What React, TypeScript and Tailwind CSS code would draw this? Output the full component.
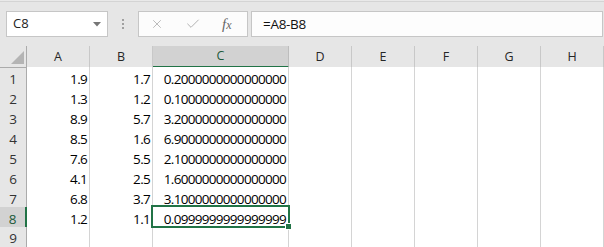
import { X, Check } from "lucide-react";

const cols = ["A", "B", "C", "D", "E", "F", "G", "H"];

const rows = [
  ["1.9", "1.7", "0.2000000000000000"],
  ["1.3", "1.2", "0.1000000000000000"],
  ["8.9", "5.7", "3.2000000000000000"],
  ["8.5", "1.6", "6.9000000000000000"],
  ["7.6", "5.5", "2.1000000000000000"],
  ["4.1", "2.5", "1.6000000000000000"],
  ["6.8", "3.7", "3.1000000000000000"],
  ["1.2", "1.1", "0.0999999999999999"],
  ["", "", ""],
];

const gridCols = "grid grid-cols-[27px_63px_63px_136px_63px_63px_63px_63px_63px]";

function Toolbar() {
  return (
    <div className="h-[46px] bg-[#e6e6e6] relative">
      <div className="h-px bg-[#e9e9e9]" />
      <div className="h-px bg-[#d4d4d4]" />
      <div className="flex items-start pt-[9px]">
        <div className="ml-[6px] w-[102px] h-[26px] bg-white border border-[#c6c6c6] flex items-center justify-between pl-[6px] pr-[6px]">
          <span className="text-[13px] text-[#222]">C8</span>
          <svg width="8" height="5" viewBox="0 0 8 5">
            <polygon points="0,0 8,0 4,4.5" fill="#767676" />
          </svg>
        </div>
        <div className="w-[30px] h-[26px] flex flex-col items-center justify-center gap-[2px]">
          <div className="w-[2px] h-[2px] bg-[#a0a0a0]" />
          <div className="w-[2px] h-[2px] bg-[#a0a0a0]" />
          <div className="w-[2px] h-[2px] bg-[#a0a0a0]" />
        </div>
        <div className="w-[110px] h-[26px] bg-[#fcfcfc] border border-[#c6c6c6] flex items-center">
          <X size={14} strokeWidth={1.5} className="ml-[11px] text-[#b2b2b2]" />
          <Check size={16} strokeWidth={1.5} className="ml-[21px] text-[#b2b2b2]" />
          <span className="ml-[21px] text-[#666] italic text-[15px] leading-none" style={{ fontFamily: '"Liberation Serif", serif' }}>
            f<span className="text-[12px]">x</span>
          </span>
        </div>
        <div className="ml-[3px] w-[352px] h-[26px] bg-[#fdfdfd] border border-[#c6c6c6] flex items-center pl-[11px]">
          <span className="text-[13.5px] text-[#111] tracking-[-0.3px]">=A8-B8</span>
        </div>
      </div>
    </div>
  );
}

function Header() {
  return (
    <div className={`${gridCols} h-[21px] bg-[#e6e6e6]`}>
      <div className="border-r border-b border-[#ababab] relative">
        <svg className="absolute left-[11px] top-[5px]" width="13" height="13" viewBox="0 0 13 13">
          <polygon points="13,0 13,13 0,13" fill="#b4b4b4" />
        </svg>
      </div>
      {cols.map((c) => {
        const sel = c === "C";
        return (
          <div
            key={c}
            className={
              sel
                ? "bg-[#d2d2d2] border-r border-[#bdbdbd] border-b-2 border-b-[#217346] flex items-center justify-center pt-px text-[12.5px] text-[#215a3a]"
                : "border-r border-b border-r-[#c8c8c8] border-b-[#ababab] flex items-center justify-center pt-[2px] text-[12.5px] text-[#262626]"
            }
          >
            {c}
          </div>
        );
      })}
    </div>
  );
}

function Row({ n, vals }: { n: number; vals: string[] }) {
  const sel = n === 8;
  return (
    <div className={`${gridCols} h-[20px]`}>
      <div
        className={
          sel
            ? "bg-[#d2d2d2] border-b border-[#c6c6c6] border-r-2 border-r-[#217346] flex items-center justify-center pt-px text-[13.5px] text-[#215a3a]"
            : "bg-[#e6e6e6] border-b border-r border-b-[#d0d0d0] border-r-[#ababab] flex items-center justify-center pt-px text-[13.5px] text-[#333]"
        }
      >
        {n}
      </div>
      {cols.map((c, i) => (
        <div
          key={c}
          className="bg-white border-r border-b border-[#d4d4d4] flex items-center justify-end pr-[2px] pt-[2px] text-[13.5px] text-black tracking-[-0.7px]"
        >
          {vals[i] ?? ""}
        </div>
      ))}
    </div>
  );
}

export default function App() {
  return (
    <div className="w-[604px] h-[247px] overflow-hidden bg-white" style={{ fontFamily: '"Open Sans", "Noto Sans", sans-serif' }}>
      <Toolbar />
      <div className="relative">
        <Header />
        {rows.map((r, i) => (
          <Row key={i} n={i + 1} vals={r} />
        ))}
        <div className="absolute left-[151px] top-[159px] w-[139px] h-[23px] border-2 border-[#217346]" />
        <div className="absolute left-[285px] top-[177px] w-[7px] h-[7px] bg-[#217346] border border-white" />
      </div>
    </div>
  );
}
